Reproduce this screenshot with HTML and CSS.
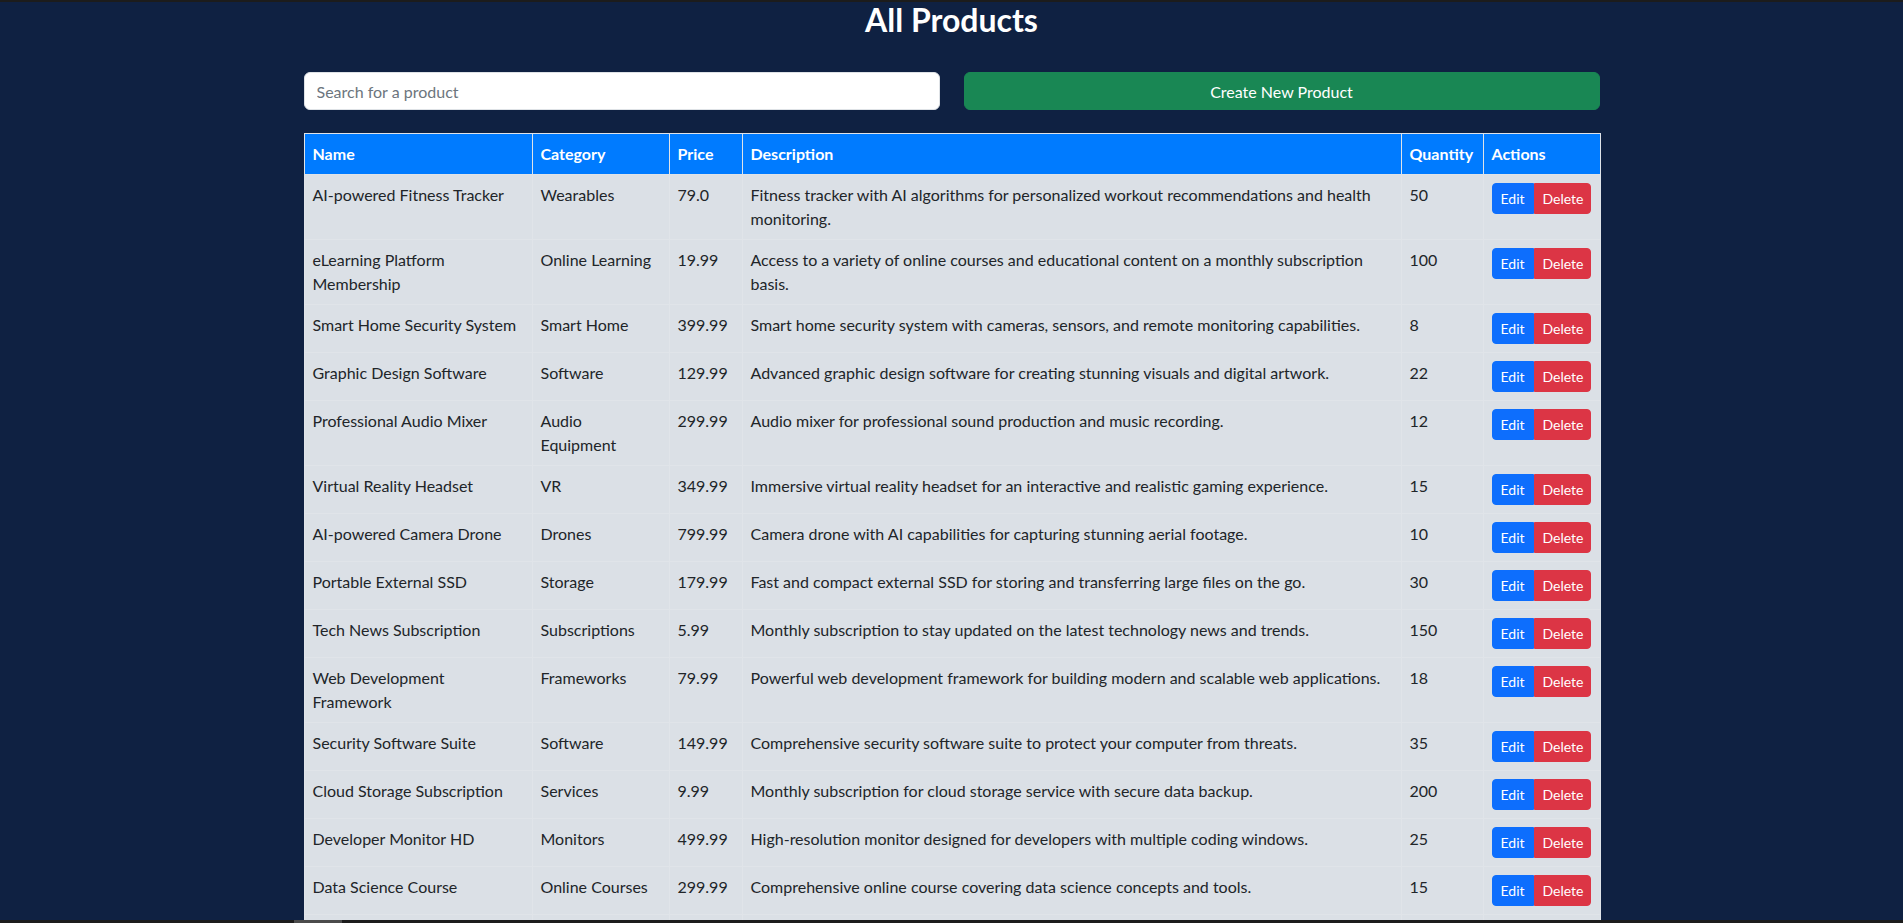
FILE: index.html
```html
<!DOCTYPE html>
<html lang="en">
<head>
<meta charset="utf-8">
<title>All Products</title>
<link rel="stylesheet" href="styles.css">
</head>
<body>
<div class="screen-top"></div>
<main class="container">
  <h1 class="title">All Products</h1>
  <div class="controls">
    <input class="search" type="text" placeholder="Search for a product">
    <button class="btn-create" type="button">Create New Product</button>
  </div>
  <table class="products">
    <colgroup>
      <col class="c-name"><col class="c-cat"><col class="c-price"><col class="c-desc"><col class="c-qty"><col class="c-act">
    </colgroup>
    <thead>
      <tr><th>Name</th><th>Category</th><th>Price</th><th>Description</th><th>Quantity</th><th>Actions</th></tr>
    </thead>
    <tbody>
      <tr><td>AI-powered Fitness Tracker</td><td>Wearables</td><td>79.0</td><td>Fitness tracker with AI algorithms for personalized workout recommendations and health monitoring.</td><td>50</td><td><div class="btn-group"><button class="btn-edit">Edit</button><button class="btn-del">Delete</button></div></td></tr>
      <tr><td>eLearning Platform Membership</td><td>Online Learning</td><td>19.99</td><td>Access to a variety of online courses and educational content on a monthly subscription basis.</td><td>100</td><td><div class="btn-group"><button class="btn-edit">Edit</button><button class="btn-del">Delete</button></div></td></tr>
      <tr><td>Smart Home Security System</td><td>Smart Home</td><td>399.99</td><td>Smart home security system with cameras, sensors, and remote monitoring capabilities.</td><td>8</td><td><div class="btn-group"><button class="btn-edit">Edit</button><button class="btn-del">Delete</button></div></td></tr>
      <tr><td>Graphic Design Software</td><td>Software</td><td>129.99</td><td>Advanced graphic design software for creating stunning visuals and digital artwork.</td><td>22</td><td><div class="btn-group"><button class="btn-edit">Edit</button><button class="btn-del">Delete</button></div></td></tr>
      <tr><td>Professional Audio Mixer</td><td>Audio Equipment</td><td>299.99</td><td>Audio mixer for professional sound production and music recording.</td><td>12</td><td><div class="btn-group"><button class="btn-edit">Edit</button><button class="btn-del">Delete</button></div></td></tr>
      <tr><td>Virtual Reality Headset</td><td>VR</td><td>349.99</td><td>Immersive virtual reality headset for an interactive and realistic gaming experience.</td><td>15</td><td><div class="btn-group"><button class="btn-edit">Edit</button><button class="btn-del">Delete</button></div></td></tr>
      <tr><td>AI-powered Camera Drone</td><td>Drones</td><td>799.99</td><td>Camera drone with AI capabilities for capturing stunning aerial footage.</td><td>10</td><td><div class="btn-group"><button class="btn-edit">Edit</button><button class="btn-del">Delete</button></div></td></tr>
      <tr><td>Portable External SSD</td><td>Storage</td><td>179.99</td><td>Fast and compact external SSD for storing and transferring large files on the go.</td><td>30</td><td><div class="btn-group"><button class="btn-edit">Edit</button><button class="btn-del">Delete</button></div></td></tr>
      <tr><td>Tech News Subscription</td><td>Subscriptions</td><td>5.99</td><td>Monthly subscription to stay updated on the latest technology news and trends.</td><td>150</td><td><div class="btn-group"><button class="btn-edit">Edit</button><button class="btn-del">Delete</button></div></td></tr>
      <tr><td>Web Development Framework</td><td>Frameworks</td><td>79.99</td><td>Powerful web development framework for building modern and scalable web applications.</td><td>18</td><td><div class="btn-group"><button class="btn-edit">Edit</button><button class="btn-del">Delete</button></div></td></tr>
      <tr><td>Security Software Suite</td><td>Software</td><td>149.99</td><td>Comprehensive security software suite to protect your computer from threats.</td><td>35</td><td><div class="btn-group"><button class="btn-edit">Edit</button><button class="btn-del">Delete</button></div></td></tr>
      <tr><td>Cloud Storage Subscription</td><td>Services</td><td>9.99</td><td>Monthly subscription for cloud storage service with secure data backup.</td><td>200</td><td><div class="btn-group"><button class="btn-edit">Edit</button><button class="btn-del">Delete</button></div></td></tr>
      <tr><td>Developer Monitor HD</td><td>Monitors</td><td>499.99</td><td>High-resolution monitor designed for developers with multiple coding windows.</td><td>25</td><td><div class="btn-group"><button class="btn-edit">Edit</button><button class="btn-del">Delete</button></div></td></tr>
      <tr><td>Data Science Course</td><td>Online Courses</td><td>299.99</td><td>Comprehensive online course covering data science concepts and tools.</td><td>15</td><td><div class="btn-group"><button class="btn-edit">Edit</button><button class="btn-del">Delete</button></div></td></tr>
      <tr class="row-tail"><td>Mechanical Keyboard</td><td>Accessories</td><td>89.99</td><td>Durable mechanical keyboard with customizable RGB lighting.</td><td>40</td><td><div class="btn-group"><button class="btn-edit">Edit</button><button class="btn-del">Delete</button></div></td></tr>
    </tbody>
  </table>
</main>
<div class="screen-bottom"><div class="screen-thumb"></div></div>
</body>
</html>
```
FILE: styles.css
```css
* { box-sizing: border-box; }

body {
  margin: 0;
  background: #0f2142;
  color: #212529;
  font-family: Lato, "Noto Sans", sans-serif;
  font-size: 16px;
  line-height: 1.5;
}

.screen-top {
  position: fixed;
  top: 0;
  left: 0;
  right: 0;
  height: 2px;
  background: #1c1c1c;
  z-index: 5;
}

.screen-bottom {
  position: fixed;
  left: 0;
  right: 0;
  bottom: 0;
  height: 3px;
  background: #1c1c1c;
  z-index: 5;
}

.screen-thumb {
  margin-left: 294px;
  width: 48px;
  height: 3px;
  background: #4b4b4b;
}

.container {
  max-width: 1296px;
  margin: 0 auto;
}

.title {
  margin: 1px 0 33px;
  font-size: 32px;
  line-height: 38px;
  font-weight: 700;
  color: #ffffff;
  text-align: center;
}

.controls {
  display: grid;
  grid-template-columns: 1fr 1fr;
  column-gap: 24px;
  margin-bottom: 23px;
}

.search {
  height: 38px;
  padding: 6px 12px;
  border: 1px solid #dee2e6;
  border-radius: 6px;
  background: #ffffff;
  font-family: inherit;
  font-size: 16px;
  color: #212529;
  outline: none;
}

.search::placeholder { color: #6c757d; }

.btn-create {
  height: 38px;
  border: 1px solid #198754;
  border-radius: 6px;
  background: #198754;
  color: #ffffff;
  font-family: inherit;
  font-size: 16px;
}

.products {
  width: 100%;
  table-layout: fixed;
  border-collapse: collapse;
  background: #dbe0e6;
}

.c-name { width: 228px; }
.c-cat { width: 137px; }
.c-price { width: 73px; }
.c-desc { width: 659px; }
.c-qty { width: 82px; }
.c-act { width: 117px; }

.products th {
  background: #007bff;
  color: #ffffff;
  font-weight: 700;
  text-align: left;
  padding: 8px;
  border: 1px solid #dfe3e8;
  line-height: 24px;
}

.products td {
  padding: 8px;
  vertical-align: top;
  border: 1px solid #e0e4e9;
  line-height: 24px;
}

.products tbody tr:first-child td { border-top: 0; }

.products .row-tail td { padding-top: 24px; }

.btn-group {
  display: inline-flex;
  vertical-align: top;
}

.btn-edit,
.btn-del {
  height: 31px;
  padding: 4px 8px;
  font-family: inherit;
  font-size: 14px;
  line-height: 21px;
  color: #ffffff;
  border: 1px solid transparent;
}

.btn-edit {
  background: #0d6efd;
  border-color: #0d6efd;
  border-radius: 4px 0 0 4px;
  width: 42px;
}

.btn-del {
  background: #dc3545;
  border-color: #dc3545;
  border-radius: 0 4px 4px 0;
  width: 57px;
}
```
